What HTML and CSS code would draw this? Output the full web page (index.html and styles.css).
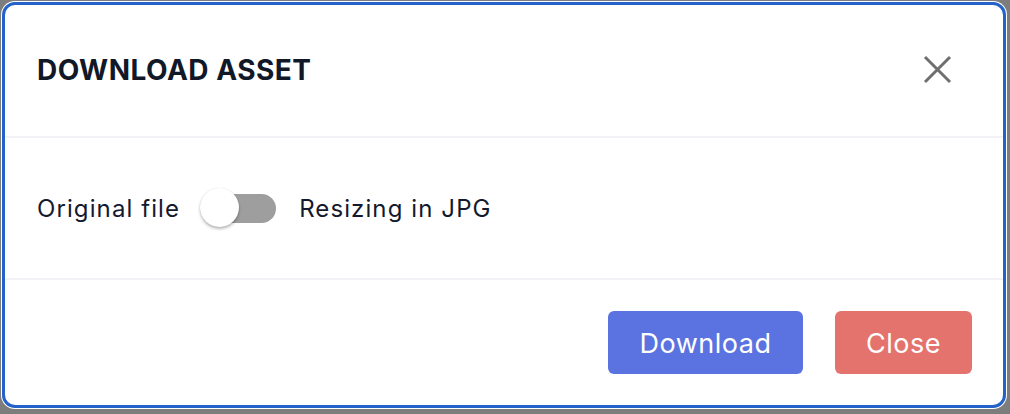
FILE: index.html
```html
<!DOCTYPE html>
<html lang="en">
<head>
<meta charset="utf-8">
<title>Download asset</title>
<link rel="stylesheet" href="styles.css">
</head>
<body>
<div class="dialog">
  <div class="dialog-header">
    <h2 class="dialog-title">DOWNLOAD ASSET</h2>
    <button class="icon-close" aria-label="Close">
      <svg width="29" height="29" viewBox="0 0 29 29"><path d="M2 2 L27 27 M27 2 L2 27" stroke="#6f6f6f" stroke-width="3" fill="none"/></svg>
    </button>
  </div>
  <div class="dialog-body">
    <span class="label">Original file</span>
    <span class="switch"><span class="track"></span><span class="thumb"></span></span>
    <span class="label">Resizing in JPG</span>
  </div>
  <div class="dialog-footer">
    <button class="btn btn-primary">Download</button>
    <button class="btn btn-danger">Close</button>
  </div>
</div>
</body>
</html>
```
FILE: styles.css
```css
* { box-sizing: border-box; }
html, body { margin: 0; height: 100%; }
body {
  background: #7d7d7d;
  padding: 2px 4px 6px 2px;
  font-family: "Inter", "Noto Sans", sans-serif;
}
.dialog {
  height: 100%;
  background: #fff;
  border: 3px solid #2462c9;
  border-radius: 13px;
  box-shadow: 0 0 0 1px #ffffff;
  display: flex;
  flex-direction: column;
}
.dialog-header {
  height: 133px;
  display: flex;
  align-items: center;
  justify-content: space-between;
  padding: 0 51px 2px 32px;
  border-bottom: 2px solid #f2f3f6;
}
.dialog-title {
  margin: 0;
  font-size: 28px;
  font-weight: 700;
  color: #111827;
  letter-spacing: 0.5px;
}
.icon-close {
  background: none;
  border: 0;
  padding: 0;
  width: 29px;
  height: 29px;
  display: flex;
}
.dialog-body {
  height: 142px;
  display: flex;
  align-items: center;
  padding: 0 32px 0 32px;
  border-bottom: 2px solid #f2f3f6;
}
.label {
  font-size: 24px;
  letter-spacing: 1.1px;
  color: #141a2e;
}
.switch {
  position: relative;
  width: 77px;
  height: 40px;
  margin: 0 23px 0 19px;
  display: inline-block;
}
.track {
  position: absolute;
  left: 6px;
  right: 0;
  top: 6px;
  height: 29px;
  border-radius: 15px;
  background: #9e9e9e;
}
.thumb {
  position: absolute;
  left: 1px;
  top: 0;
  width: 39px;
  height: 39px;
  border-radius: 50%;
  background: #fff;
  box-shadow: 0 2px 3px rgba(0,0,0,0.28), 0 0 1px rgba(0,0,0,0.15);
}
.dialog-footer {
  flex: 1;
  display: flex;
  align-items: center;
  justify-content: flex-end;
  gap: 32px;
  padding: 0 31px 0 0;
}
.btn {
  height: 63px;
  border: 0;
  border-radius: 6px;
  color: #fff;
  font-family: inherit;
  font-size: 27px;
  letter-spacing: 0.5px;
  font-weight: 400;
  padding-top: 2px;
}
.btn-primary { background: #5a73e0; width: 195px; }
.btn-danger { background: #e4736e; width: 137px; }
```
